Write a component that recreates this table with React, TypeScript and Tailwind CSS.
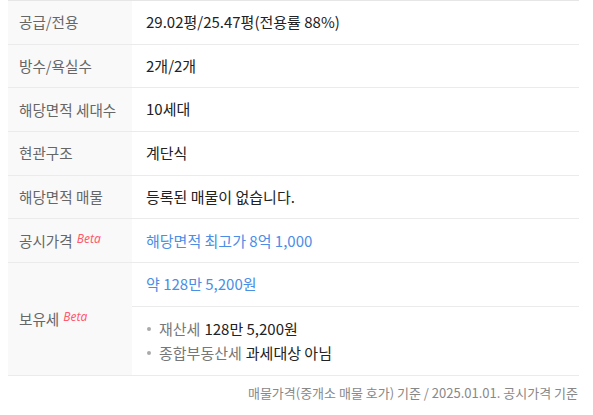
import React from "react";

const font = { fontFamily: '"Noto Sans CJK KR", "Noto Sans", sans-serif' };

function Beta() {
  return (
    <sup className="ml-[4px] text-[12px] italic font-normal text-[#ff5a6e] relative top-[-4px]" style={{ fontFamily: '"Noto Sans", sans-serif' }}>
      Beta
    </sup>
  );
}

function Row({ label, children }: { label: React.ReactNode; children: React.ReactNode }) {
  return (
    <div className="flex border-b border-[#ebebeb] h-[43.7px]">
      <div className="w-[124px] shrink-0 bg-[#f9f9f9] pl-[11px] flex items-center text-[14.6px] text-[#666]">{label}</div>
      <div className="flex-1 pl-[14px] flex items-center text-[15px] text-[#222]">{children}</div>
    </div>
  );
}

export default function App() {
  return (
    <div className="w-[593px] h-[415px] bg-white" style={font}>
      <div className="mx-[8px] w-[571px] border-t border-[#e6e6e6]">
        <Row label="공급/전용">29.02평/25.47평(전용률 88%)</Row>
        <Row label="방수/욕실수">2개/2개</Row>
        <Row label="해당면적 세대수">10세대</Row>
        <Row label="현관구조">계단식</Row>
        <Row label="해당면적 매물">등록된 매물이 없습니다.</Row>
        <Row label={<span>공시가격<Beta /></span>}>
          <span className="text-[#4a8ee6]">해당면적 최고가 8억 1,000</span>
        </Row>
        <div className="flex border-b border-[#ebebeb] h-[113px]">
          <div className="w-[124px] shrink-0 bg-[#f9f9f9] pl-[11px] flex items-center text-[14.6px] text-[#666]">
            <span>보유세<Beta /></span>
          </div>
          <div className="flex-1 flex flex-col">
            <div className="h-[44px] border-b border-[#ebebeb] pl-[14px] flex items-center text-[15px] text-[#4a8ee6]">
              약 128만 5,200원
            </div>
            <div className="flex-1 pl-[14px] flex flex-col justify-center gap-[1px] text-[15px]">
              <div className="flex items-center">
                <span className="w-[4px] h-[4px] rounded-full bg-[#aaa] mr-[8px] ml-[1px]" />
                <span className="text-[#777]">재산세</span>
                <span className="ml-[4px] text-[#222]">128만 5,200원</span>
              </div>
              <div className="flex items-center">
                <span className="w-[4px] h-[4px] rounded-full bg-[#aaa] mr-[8px] ml-[1px]" />
                <span className="text-[#777]">종합부동산세</span>
                <span className="ml-[4px] text-[#222]">과세대상 아님</span>
              </div>
            </div>
          </div>
        </div>
        <div className="text-right text-[13px] text-[#888] pt-[7px] pr-[1px]">
          매물가격(중개소 매물 호가) 기준 / 2025.01.01. 공시가격 기준
        </div>
      </div>
    </div>
  );
}
